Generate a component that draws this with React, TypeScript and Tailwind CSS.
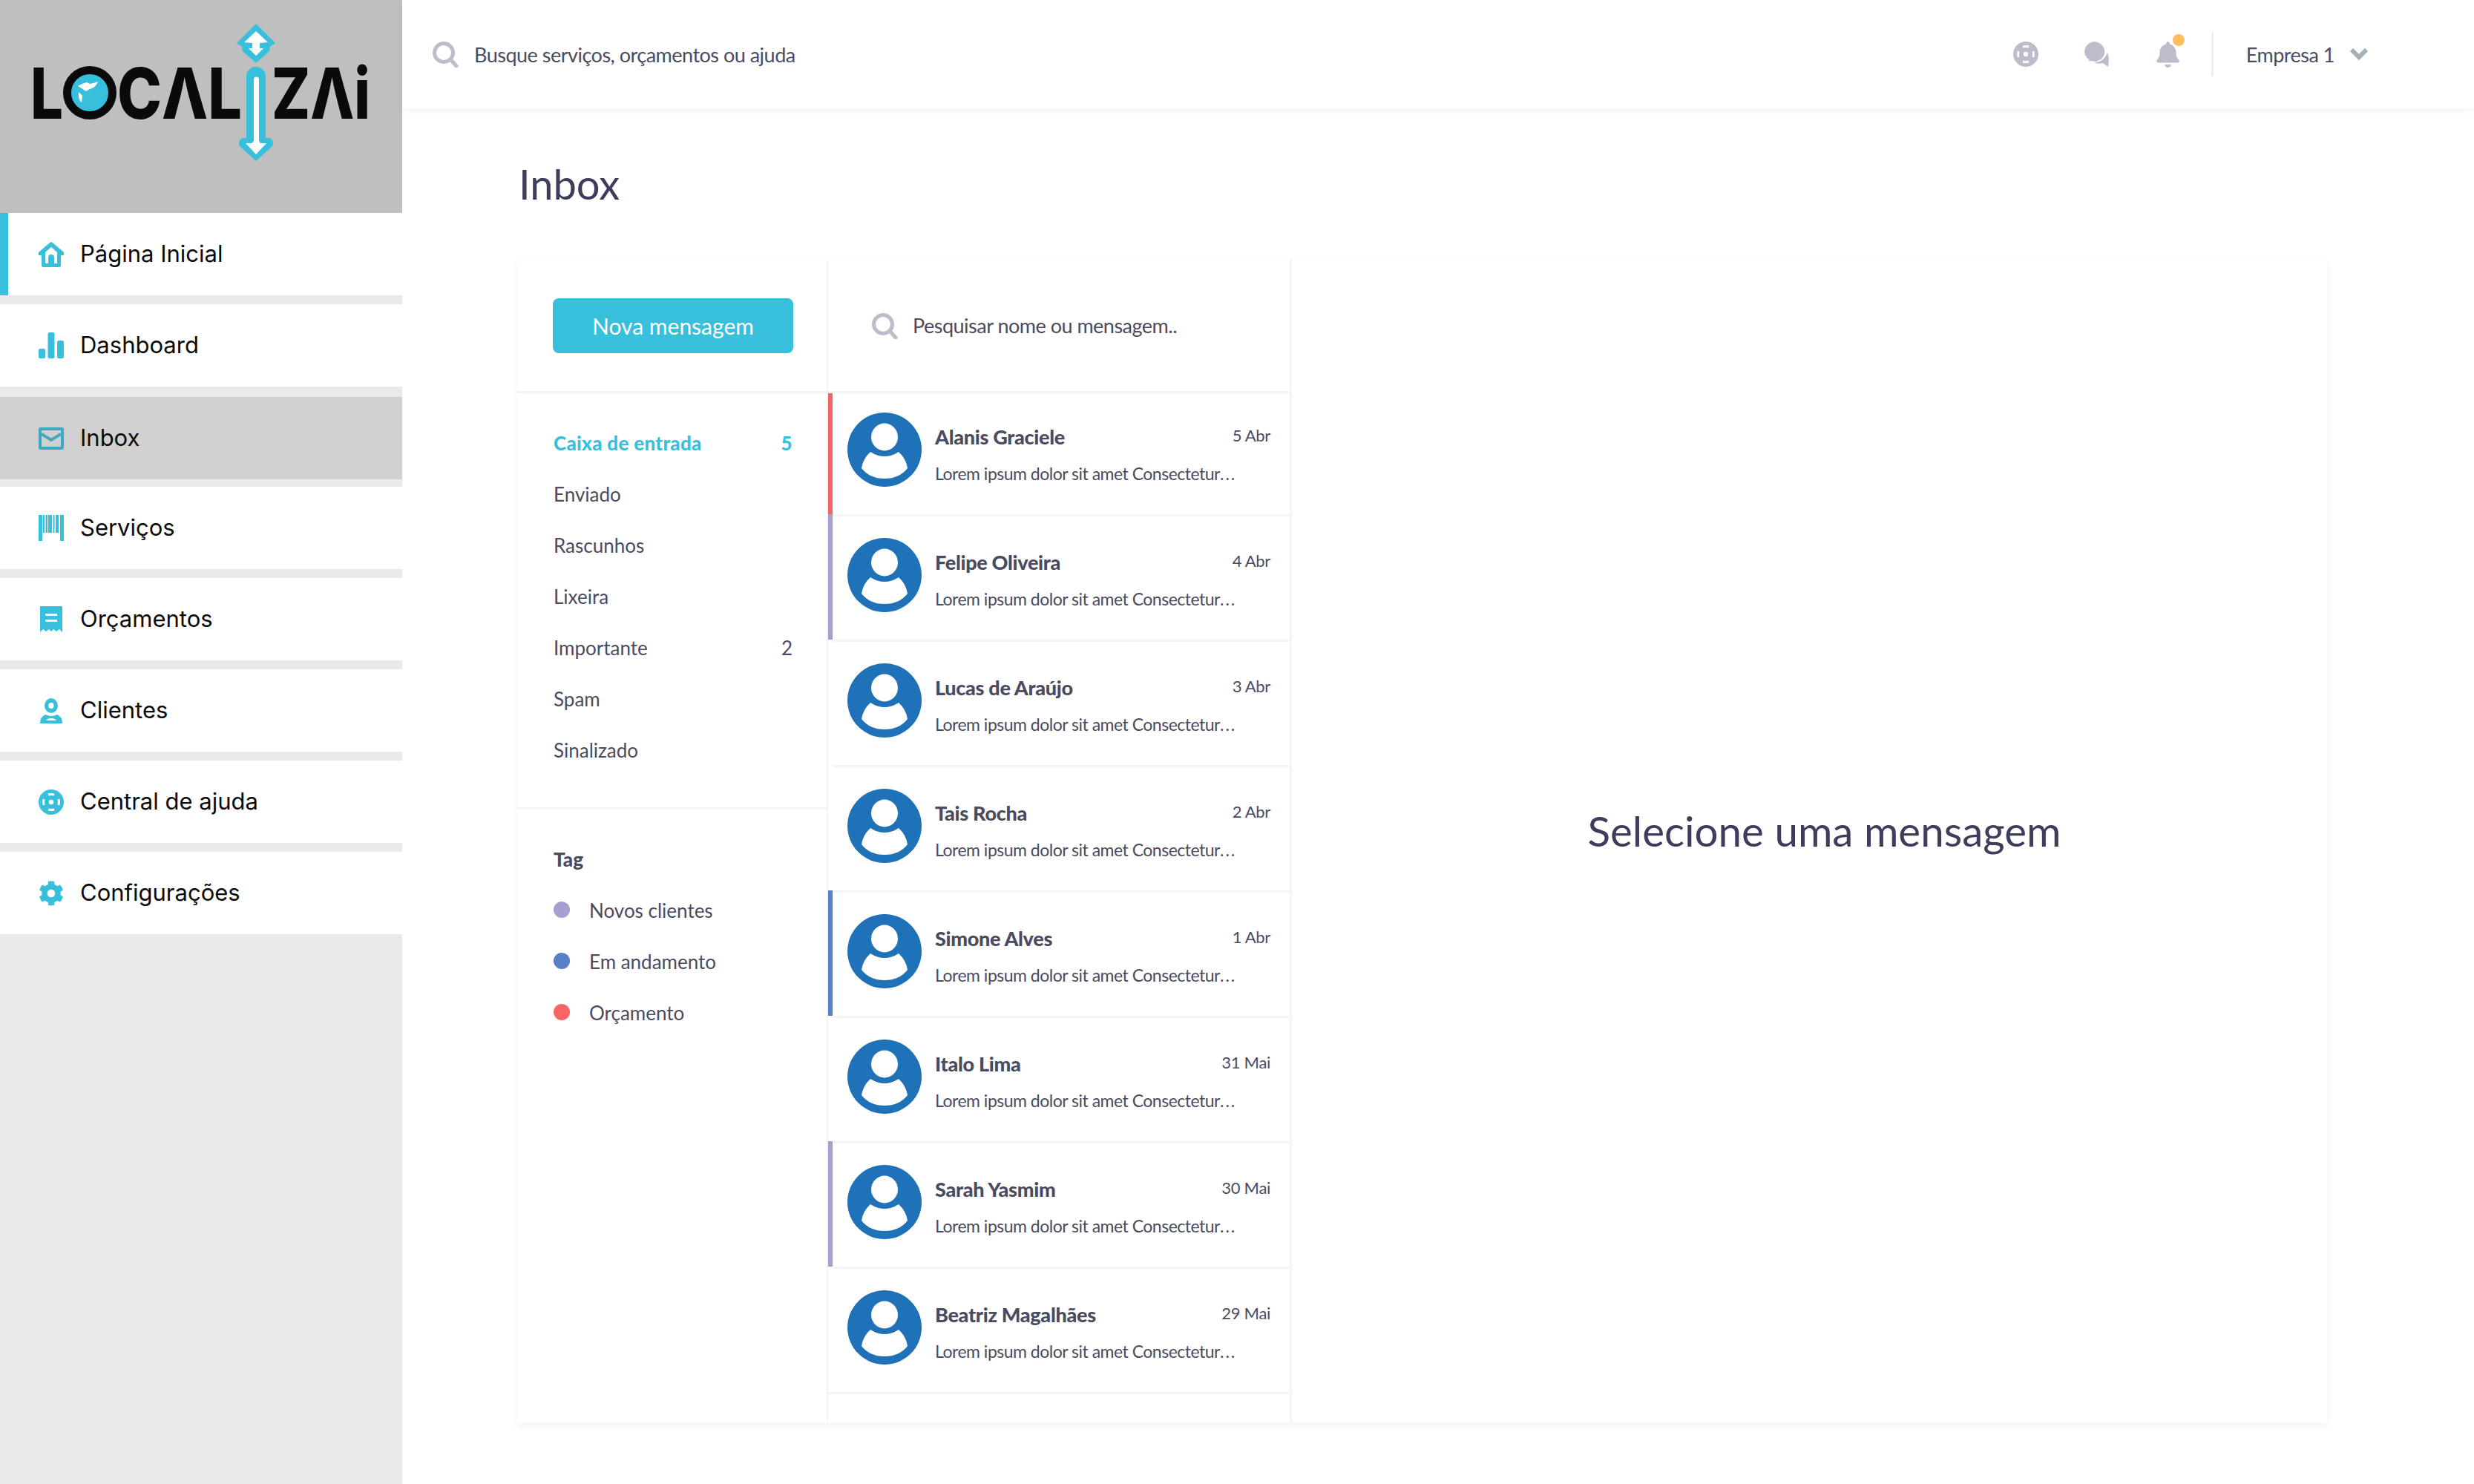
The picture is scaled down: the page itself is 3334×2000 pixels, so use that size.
import * as React from "react";
import { FaBell, FaCog } from "react-icons/fa";

function Logo() {
  const parts = [
    { t: "L", x: 41, w: 44 },
    { t: "CΛL", x: 158, w: 168 },
    { t: "ZΛi", x: 366, w: 133 },
  ];
  return (
    <svg width="542" height="287" viewBox="0 0 542 287">
      {parts.map((l) => (
        <text
          key={l.t}
          x={l.x}
          y="160"
          fontFamily="Inter, sans-serif"
          fontWeight="800"
          fontSize="95"
          fill="#0a0a0c"
          textLength={l.w}
          lengthAdjust="spacingAndGlyphs"
        >
          {l.t}
        </text>
      ))}
      <circle cx="121" cy="125" r="30.5" fill="#38bfdb" stroke="#0a0a0c" strokeWidth="11" />
      <path d="M105 116 Q112 112 117 111 L121 113 L126 112 L132 110 Q129 118 121 120 L116 123 Q110 119 105 116Z" fill="#fff" />
      <path d="M106 124 L111 129 L110 138 Q105 134 106 124Z" fill="#fff" />
      <path d="M345 34 L369 58 L362 62 V68 L345 83 L328 68 V62 L321 58Z" fill="#38bfdb" strokeLinejoin="round" stroke="#38bfdb" strokeWidth="3" />
      <path d="M345 42 L361 57 L350 58 V65 L355 65 L345 75 L335 65 L340 65 V58 L329 57Z" fill="#fff" />
      <path d="M332 103 a13 13 0 0 1 26 0 V186 H364 Q370 190 367 197 L345 217 L323 197 Q320 190 326 186 H332Z" fill="#38bfdb" />
      <path d="M342 107 a3.5 3.5 0 0 1 7 0 V190 L351 193 H359 L345 208 L331 193 H339 L342 190Z" fill="#fff" />
    </svg>
  );
}

function HomeIcon() {
  return (
    <svg viewBox="0 0 34 34" className="w-[34px] h-[34px]">
      <path
        fillRule="evenodd"
        d="M17 0 L20 2 L34 14 V18 H30 V32 a2 2 0 0 1 -2 2 H6 a2 2 0 0 1 -2 -2 V18 H0 V14 L14 2Z M17 7 L9 14 V29 H13 V21 a4 4 0 0 1 8 0 V29 H25 V14Z"
        fill="currentColor"
      />
    </svg>
  );
}

function BarsIcon() {
  return (
    <svg viewBox="0 0 34 35" className="w-[34px] h-[35px]" fill="currentColor">
      <rect x="0" y="22" width="9" height="13" rx="2" />
      <rect x="12.5" y="0" width="9" height="35" rx="2" />
      <rect x="25" y="11" width="9" height="24" rx="2" />
    </svg>
  );
}

function MailIcon() {
  return (
    <svg viewBox="0 0 34 30" className="w-[34px] h-[30px]" fill="none" stroke="currentColor">
      <rect x="2" y="2" width="30" height="26" rx="1" strokeWidth="4" />
      <path d="M4 9 L17 17 L30 9" strokeWidth="4" />
    </svg>
  );
}

function BarcodeIcon() {
  return (
    <svg viewBox="0 0 34 35" className="w-[34px] h-[35px]" fill="currentColor">
      <rect x="0" y="0" width="5" height="35" />
      <rect x="6" y="0" width="2" height="24" />
      <rect x="9.5" y="0" width="2.5" height="24" />
      <rect x="13" y="0" width="5" height="24" />
      <rect x="19.5" y="0" width="2" height="24" />
      <rect x="23" y="0" width="4" height="24" />
      <rect x="29" y="0" width="5" height="35" />
    </svg>
  );
}

function ReceiptIcon() {
  return (
    <svg viewBox="0 0 30 35" className="w-[30px] h-[35px]">
      <path
        fillRule="evenodd"
        d="M1 0 H29 a1 1 0 0 1 1 1 V35 L26 31 L22 34 L18 31 L15 34 L12 31 L8 34 L4 31 L0 35 V1 a1 1 0 0 1 1 -1Z M7 10 V13 H23 V10Z M7 18 V21 H23 V18Z"
        fill="currentColor"
      />
    </svg>
  );
}

function UserIcon() {
  return (
    <svg viewBox="0 0 30 34" className="w-[30px] h-[34px]">
      <path
        fillRule="evenodd"
        d="M15 0 a9 10 0 0 1 0 20 a9 10 0 0 1 0 -20Z M15 6 a3.5 4 0 0 0 0 8 a3.5 4 0 0 0 0 -8Z"
        fill="currentColor"
      />
      <path
        fillRule="evenodd"
        d="M7 22 Q15 26 23 22 Q30 25 30 34 H0 Q0 25 7 22Z M8 30 H22 Q20 27 15 27 Q10 27 8 30Z"
        fill="currentColor"
      />
    </svg>
  );
}

function HelpIcon() {
  return (
    <svg viewBox="0 0 34 34" className="w-[34px] h-[34px]">
      <circle cx="17" cy="17" r="17" fill="currentColor" />
      <circle cx="17" cy="17" r="3.2" fill="#fff" />
      <path
        d="M13 7 Q17 6 21 7 M13 27 Q17 28 21 27 M7 13 Q6 17 7 21 M27 13 Q28 17 27 21"
        stroke="#fff"
        strokeWidth="3"
        fill="none"
      />
    </svg>
  );
}

function ChatIcon() {
  return (
    <svg viewBox="0 0 35 34" className="w-[35px] h-[34px]" fill="currentColor">
      <path d="M14 0 a14 13.5 0 0 1 9 24 L17 27 Q11 26 5 26 L8 25 A14 13.5 0 0 1 14 0Z" />
      <path d="M32 15 Q35 22 33 34 L26 29 Q19 31 14 28 Q27 28 32 15Z" />
    </svg>
  );
}

function SearchIcon() {
  return (
    <svg viewBox="0 0 35 35" className="w-[35px] h-[35px] shrink-0" fill="none" stroke="#bdbccb">
      <circle cx="15" cy="15" r="12.5" strokeWidth="5" />
      <path d="M24 24 L32 33" strokeWidth="5" strokeLinecap="round" />
    </svg>
  );
}

function Chevron() {
  return (
    <svg viewBox="0 0 24 17" className="w-[24px] h-[17px] ml-[21px]" fill="none" stroke="#a5b1b8" strokeWidth="6">
      <path d="M2 2 L12 12 L22 2" />
    </svg>
  );
}

function Avatar() {
  return (
    <svg viewBox="0 0 100 100" className="w-[100px] h-[100px] shrink-0">
      <circle cx="50" cy="50" r="50" fill="#2072b8" />
      <ellipse cx="50" cy="33" rx="18" ry="18.5" fill="#fff" />
      <path d="M31 53 Q40 59 50 59 Q60 59 69 53 Q79 62 81 75 Q70 89 50 89 Q30 89 19 75 Q21 62 31 53Z" fill="#fff" />
    </svg>
  );
}

const navItems = [
  { label: "Página Inicial", icon: <HomeIcon />, mb: "mb-[12px]", active: true },
  { label: "Dashboard", icon: <BarsIcon />, mb: "mb-[14px]" },
  { label: "Inbox", icon: <MailIcon />, mb: "mb-[10px]", selected: true },
  { label: "Serviços", icon: <BarcodeIcon />, mb: "mb-[12px]" },
  { label: "Orçamentos", icon: <ReceiptIcon />, mb: "mb-[12px]" },
  { label: "Clientes", icon: <UserIcon />, mb: "mb-[12px]" },
  { label: "Central de ajuda", icon: <HelpIcon />, mb: "mb-[12px]" },
  { label: "Configurações", icon: <FaCog size={34} />, mb: "" },
];

const folders = [
  { label: "Caixa de entrada", count: "5", active: true },
  { label: "Enviado" },
  { label: "Rascunhos" },
  { label: "Lixeira" },
  { label: "Importante", count: "2" },
  { label: "Spam" },
  { label: "Sinalizado" },
];

const tags = [
  { label: "Novos clientes", dot: "bg-[#a79fd0]" },
  { label: "Em andamento", dot: "bg-[#5680c8]" },
  { label: "Orçamento", dot: "bg-[#f96464]" },
];

const messages = [
  { name: "Alanis Graciele", date: "5 Abr", mark: "bg-[#f96464]" },
  { name: "Felipe Oliveira", date: "4 Abr", mark: "bg-[#a79fd0]" },
  { name: "Lucas de Araújo", date: "3 Abr", mark: "bg-transparent" },
  { name: "Tais Rocha", date: "2 Abr", mark: "bg-transparent" },
  { name: "Simone Alves", date: "1 Abr", mark: "bg-[#5680c8]" },
  { name: "Italo Lima", date: "31 Mai", mark: "bg-transparent" },
  { name: "Sarah Yasmim", date: "30 Mai", mark: "bg-[#a79fd0]" },
  { name: "Beatriz Magalhães", date: "29 Mai", mark: "bg-transparent" },
];

export default function App() {
  return (
    <div className="flex w-[3334px] h-[2000px] overflow-hidden bg-white font-['Lato',sans-serif] text-[#4a4b5f]">
      <aside className="w-[542px] shrink-0 bg-[#e9eaec]">
        <div className="h-[287px] bg-[#bfbfbf]">
          <Logo />
        </div>
        <nav className="font-['Inter',sans-serif] text-[31px] text-[#0a0a0a]">
          {navItems.map((item) => (
            <div
              key={item.label}
              className={`flex items-center h-[111px] ${item.mb} ${item.selected ? "bg-[#d1cfd0]" : "bg-white"} ${item.active ? "border-l-[11px] border-[#38bfdb] pl-[41px]" : "pl-[52px]"}`}
            >
              <span className={`flex justify-center w-[34px] ${item.selected ? "text-[#3fa8c2]" : "text-[#38bfdb]"}`}>{item.icon}</span>
              <span className="ml-[22px] -mt-[1px]">{item.label}</span>
            </div>
          ))}
        </nav>
      </aside>

      <main className="flex-1 min-w-0">
        <header className="flex items-center h-[146px] pl-[41px] pr-[143px] shadow-[0_3px_10px_rgba(0,0,0,0.05)] text-[27px] tracking-[-0.5px]">
          <SearchIcon />
          <span className="ml-[21px] pt-[2px]">Busque serviços, orçamentos ou ajuda</span>
          <div className="flex items-center ml-auto text-[#bdbccb]">
            <HelpIcon />
            <span className="ml-[61px]">
              <ChatIcon />
            </span>
            <span className="relative ml-[61px]">
              <FaBell size={35} />
              <span className="absolute -top-[10px] -right-[5px] w-[16px] h-[16px] rounded-full bg-[#ffbe5c]" />
            </span>
            <span className="w-[3px] h-[60px] ml-[41px] bg-[#eeeef2]" />
            <span className="ml-[44px] pt-[2px] text-[#4a4b5f]">Empresa 1</span>
            <Chevron />
          </div>
        </header>

        <div className="pl-[155px]">
          <h1 className="flex items-center h-[204px] pl-[2px] text-[56px] font-normal text-[#3d3d5c]">Inbox</h1>
          <div className="flex w-[2439px] h-[1568px] overflow-hidden bg-white shadow-[0_3px_10px_rgba(0,0,0,0.06)]">
            <div className="w-[419px] shrink-0 border-r-[2px] border-[#f4f4f6] text-[26px]">
              <div className="h-[180px] pt-[52px] pl-[48px] border-b-[3px] border-[#f4f4f6]">
                <button className="w-[324px] h-[74px] rounded-[8px] bg-[#38bfdb] text-[30px] text-white">Nova mensagem</button>
              </div>
              <ul className="pt-[33px] pb-[42px] border-b-[3px] border-[#f4f4f6]">
                {folders.map((f) => (
                  <li
                    key={f.label}
                    className={`flex items-center justify-between h-[69px] pl-[49px] pr-[46px] ${f.active ? "font-black tracking-[0.3px] text-[#38bfdb]" : ""}`}
                  >
                    <span>{f.label}</span>
                    {f.count && <span>{f.count}</span>}
                  </li>
                ))}
              </ul>
              <div className="pt-[33px]">
                <div className="flex items-center h-[69px] pl-[49px] font-black">Tag</div>
                {tags.map((t) => (
                  <div key={t.label} className="flex items-center h-[69px] pl-[49px]">
                    <span className={`w-[22px] h-[22px] mb-[3px] rounded-full ${t.dot}`} />
                    <span className="ml-[26px]">{t.label}</span>
                  </div>
                ))}
              </div>
            </div>

            <div className="w-[625px] shrink-0 border-r-[3px] border-[#f4f4f6]">
              <div className="flex items-center h-[180px] pl-[59px] pt-[2px] border-b-[3px] border-[#f4f4f6] text-[27px] tracking-[-0.5px]">
                <SearchIcon />
                <span className="ml-[20px]">Pesquisar nome ou mensagem..</span>
              </div>
              {messages.map((m, i) => (
                <div key={m.name} className={`flex ${i === 0 ? "h-[163px]" : "h-[169px]"}`}>
                  <span className={`w-[6px] shrink-0 ${m.mark}`} />
                  <div className={`flex flex-1 min-w-0 pl-[20px] pr-[26px] ${i === 0 ? "pt-[26px]" : "pt-[29px] border-t-[3px] border-[#f4f4f6]"}`}>
                    <Avatar />
                    <div className="flex-1 min-w-0 ml-[18px] pt-[16px]">
                      <div className="flex justify-between h-[34px] leading-[34px]">
                        <span className="text-[27px] font-black tracking-[-0.3px]">{m.name}</span>
                        <span className="text-[22px] leading-[30px] tracking-[-0.3px]">{m.date}</span>
                      </div>
                      <p className="mt-[15px] h-[34px] leading-[34px] text-[23px] tracking-[-0.5px] whitespace-nowrap">
                        Lorem ipsum dolor sit amet Consectetur<span className="tracking-[2px]">...</span>
                      </p>
                    </div>
                  </div>
                </div>
              ))}
              <div className="h-[43px] border-t-[3px] border-[#f4f4f6]" />
            </div>

            <div className="flex flex-1 items-center justify-center pl-[40px] pb-[30px]">
              <p className="text-[56.5px] text-[#3d3d5c]">Selecione uma mensagem</p>
            </div>
          </div>
        </div>
      </main>
    </div>
  );
}
